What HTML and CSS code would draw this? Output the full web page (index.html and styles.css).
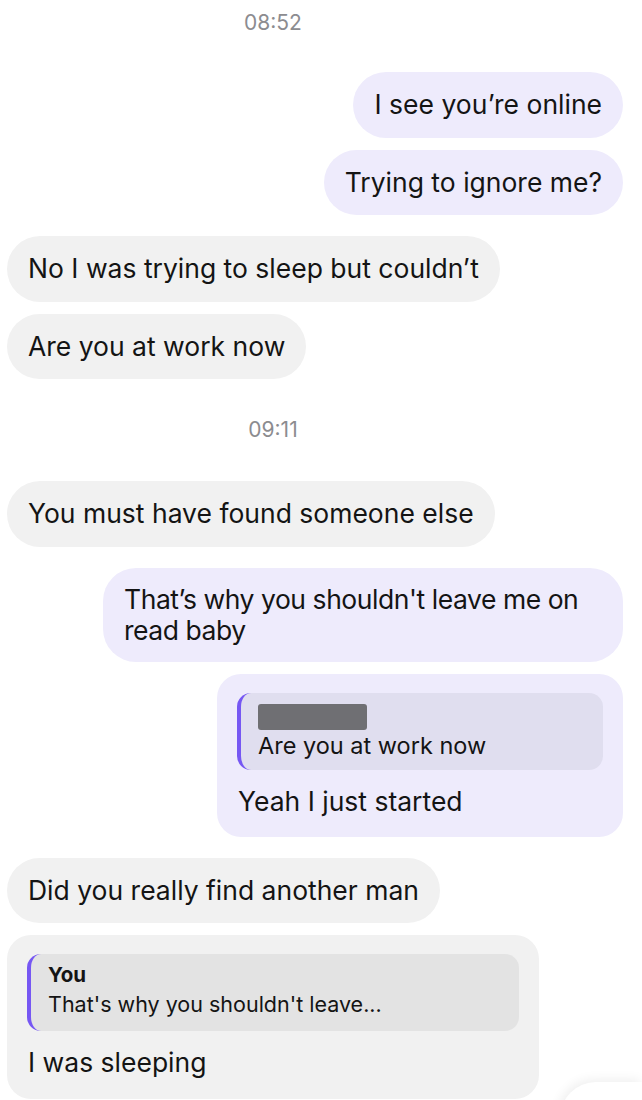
FILE: index.html
```html
<!DOCTYPE html>
<html lang="en">
<head>
  <meta charset="UTF-8">
  <meta name="viewport" content="width=device-width, initial-scale=1.0">
  <title>Chat</title>
  <link rel="stylesheet" href="styles.css">
</head>
<body>
  <div class="chat">
    <div class="time">08:52</div>

    <div class="msg out first-after-time">I see you’re online</div>
    <div class="msg out">Trying to ignore me?</div>

    <div class="msg in group">No I was trying to sleep but couldn’t</div>
    <div class="msg in">Are you at work now</div>

    <div class="time second">09:11</div>

    <div class="msg in after-second">You must have found someone else</div>
    <div class="msg out group tight">That’s why you shouldn't leave me on read baby</div>

    <div class="msg out reply">
      <div class="quote">
        <div class="quote-name"><span class="redacted"></span></div>
        <div class="quote-text">Are you at work now</div>
      </div>
      <div class="reply-text">Yeah I just started</div>
    </div>

    <div class="msg in group">Did you really find another man</div>

    <div class="msg in reply">
      <div class="quote">
        <div class="quote-name">You</div>
        <div class="quote-text small">That's why you shouldn't leave...</div>
      </div>
      <div class="reply-text">I was sleeping</div>
    </div>
  </div>

  <!-- floating scroll button peeking in at the bottom -->
  <div class="fab"></div>
</body>
</html>
```

FILE: styles.css
```css
body {
  margin: 0;
  background: #fff;
  font-family: Inter, "Noto Sans", sans-serif;
  color: #141414;
  height: 1100px;
  overflow: hidden;
  position: relative;
}
.chat {
  display: flex;
  flex-direction: column;
  align-items: flex-start;
  padding: 11px 19px 0 7px;
}
.time {
  align-self: stretch;
  text-align: center;
  padding-right: 84px;
  font-size: 21px;
  line-height: 24px;
  color: #8c8c90;
}
.time.second {
  margin-top: 39px;
}
.msg {
  font-size: 26.5px;
  line-height: 31px;
  padding: 17.25px 21px;
  border-radius: 33px;
  margin-top: 12px;
  max-width: 478px;
}
.msg.tight {
  letter-spacing: -0.45px;
  padding-top: 16px;
  padding-bottom: 16px;
}
.msg.first-after-time {
  margin-top: 37px;
}
.msg.after-second {
  margin-top: 39px;
}
.msg.group {
  margin-top: 21px;
}
.out {
  align-self: flex-end;
  background: #eeebfc;
}
.in {
  background: #f1f1f1;
}
.msg.reply {
  max-width: none;
  border-radius: 24px;
  padding: 19px 20px 20px;
}
.in.reply {
  padding-bottom: 21px;
}
.quote {
  border-left: 4px solid #7657f3;
  border-radius: 14px;
  padding: 9px 16px 12px 17px;
}
.out .quote {
  background: #e0deef;
  min-width: 329px;
  padding-bottom: 8px;
}
.in .quote {
  background: #e3e3e3;
  min-width: 455px;
}
.quote-name {
  font-size: 20.5px;
  font-weight: 700;
  line-height: 24px;
}
.redacted {
  display: block;
  width: 109px;
  height: 26px;
  margin-top: 2px;
  border-radius: 3px;
  background: #6f6f73;
  filter: blur(0.7px);
}
.quote-text {
  font-size: 23.5px;
  line-height: 32px;
}
.quote-text.small {
  font-size: 21.5px;
  margin-top: 2px;
  line-height: 30px;
}
.reply-text {
  margin-top: 16px;
  padding-left: 1px;
}
.fab {
  position: absolute;
  right: 0;
  top: 1082px;
  width: 82px;
  height: 40px;
  border-top-left-radius: 36px;
  background: #fff;
  box-shadow: -2px -2px 12px rgba(0, 0, 0, 0.07);
}
```
